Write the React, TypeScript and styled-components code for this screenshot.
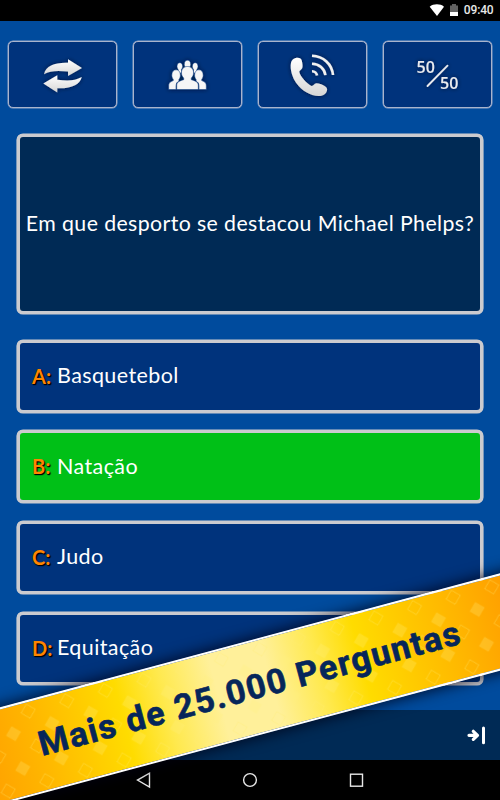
import React from "react";
import styled, { createGlobalStyle } from "styled-components";

const GlobalStyle = createGlobalStyle`
  * { box-sizing: border-box; }
  body { margin: 0; background: #000; }
`;

const Screen = styled.div`
  position: relative;
  display: flex;
  flex-direction: column;
  width: 500px;
  height: 800px;
  overflow: hidden;
  background: #004b9d;
  color: #fff;
  font-family: Lato, sans-serif;
`;

const StatusBar = styled.header`
  display: flex;
  align-items: center;
  justify-content: flex-end;
  height: 21px;
  flex: none;
  padding-right: 6.5px;
  background: #000;
`;

const Clock = styled.span`
  margin-left: 5px;
  font: 500 12px/21px Roboto, sans-serif;
  letter-spacing: -0.15px;
  color: #e8e8e8;
`;

const Lifelines = styled.nav`
  display: grid;
  grid-template-columns: repeat(4, 109px);
  gap: 16px;
  height: 67px;
  margin: 20.4px 8px 0;
  flex: none;
`;

const LifelineButton = styled.button`
  display: block;
  padding: 0;
  border: 1px solid #a9b4cc;
  border-radius: 5px;
  background: #00337c;
  box-shadow: 0 0 0 0.5px #8fa3c8;
  overflow: hidden;

  svg {
    display: block;
    margin: 0 0 -1px -1px;
  }
`;

const Quiz = styled.main`
  display: flex;
  flex-direction: column;
  flex: 1;
  padding: 25.2px 17px 0;
`;

const Question = styled.section`
  display: flex;
  align-items: center;
  justify-content: center;
  height: 180px;
  flex: none;
  border: 3px solid #cbcbcf;
  border-radius: 6px;
  padding-bottom: 2px;
  background: #002a55;
  box-shadow: 0 0 0 0.6px #cbcbcf;
  font-size: 21.3px;
  letter-spacing: 0.4px;
  white-space: nowrap;
`;

const Answers = styled.div`
  display: flex;
  flex-direction: column;
  gap: 17.6px;
  margin-top: 26.2px;
`;

const Answer = styled.button<{ $correct?: boolean }>`
  display: flex;
  align-items: center;
  height: 73px;
  padding: 0 0 2px 12px;
  border: 3px solid #cbcbcf;
  border-radius: 6px;
  background: ${(p) => (p.$correct ? "#00c017" : "#00337c")};
  box-shadow: 0 0 0 0.6px #cbcbcf;
  color: #fff;
  font: 400 21.5px/26px Lato, sans-serif;
  letter-spacing: 0.4px;
  text-align: left;
`;

const Letter = styled.b`
  width: 25px;
  padding-top: 1px;
  font: 700 20px/26px Lato, sans-serif;
  letter-spacing: 0;
  color: #ff8500;
  text-shadow: 1px 1px 1px #000, 1px 1px 1px rgba(0, 0, 0, 0.8);
`;

const Footer = styled.footer`
  display: flex;
  align-items: center;
  justify-content: flex-end;
  height: 50px;
  flex: none;
  padding-right: 13px;
  background: #002a55;
`;

const SystemNav = styled.div`
  display: flex;
  align-items: center;
  justify-content: center;
  gap: 86px;
  height: 40px;
  flex: none;
  background: #000;
`;

const Ribbon = styled.div`
  position: absolute;
  left: -60px;
  top: 641.7px;
  display: flex;
  align-items: center;
  justify-content: center;
  width: 620px;
  height: 94px;
  border: solid #fff;
  border-width: 2px 0;
  background: linear-gradient(
    90deg,
    #ffa000 30px,
    #ffb400 85px,
    #ffdc00 180px,
    #ffe94e 225px,
    #fff09a 278px,
    #fff09a 332px,
    #ffe94e 382px,
    #ffdc00 425px,
    #ffb400 530px,
    #ffa000 580px
  );
  box-shadow: 0 0 14px 2px rgba(0, 0, 20, 0.75);
  transform: rotate(-15deg);
`;

const RibbonPattern = styled.svg`
  position: absolute;
  inset: 0;
`;

const Slogan = styled.strong`
  padding-bottom: 2px;
  z-index: 1;
  font: 700 34px/88px Roboto, sans-serif;
  letter-spacing: 1.45px;
  white-space: nowrap;
  color: #06265a;
  -webkit-text-stroke: 0.6px #06265a;
`;

const answers = [
  { letter: "A", text: "Basquetebol" },
  { letter: "B", text: "Natação", correct: true },
  { letter: "C", text: "Judo" },
  { letter: "D", text: "Equitação" },
];

const IconDefs = () => (
  <defs>
    <linearGradient id="silver" x1="0" y1="0" x2="0" y2="1">
      <stop offset="0" stopColor="#fff" />
      <stop offset="1" stopColor="#d6d6d6" />
    </linearGradient>
    <filter id="soft" x="-30%" y="-30%" width="160%" height="160%">
      <feDropShadow dx="0" dy="0" stdDeviation="2" floodColor="#000820" floodOpacity="0.7" />
    </filter>
  </defs>
);

const SwapIcon = () => (
  <svg width="109" height="67" viewBox="0 0 109 67">
    <IconDefs />
    <g fill="url(#silver)" filter="url(#soft)">
      <path d="M36 32.2C38 23.500 47 20.400 60 20.800V17.200L74 26L60 34V29.500C50 28.500 42 28.500 36 32.200Z" />
      <path d="M73.800 35C72 42.500 64 46.800 49.300 46.300V50.500L35.300 41.500L49.300 33.200V37.700C59 39 67 39 73.800 35Z" />
    </g>
  </svg>
);

const AudienceIcon = () => (
  <svg width="109" height="67" viewBox="0 0 109 67">
    <g fill="#f6f6f6" stroke="#00337c" strokeWidth="0.5" filter="url(#soft)">
      <path d="M44 24.500c0-2.500 1.100-3.800 2.800-3.800s2.800 1.300 2.800 3.800c0 1.200-.5 2.200-1.100 2.800v4.200l-3.400-1.500v-2.700c-.6-.6-1.100-1.600-1.100-2.800Z" />
      <path d="M59.400 24.500c0-2.500 1.100-3.800 2.800-3.800s2.800 1.300 2.800 3.800c0 1.200-.5 2.200-1.100 2.800v2.700l-3.400 1.500v-4.200c-.6-.6-1.100-1.600-1.100-2.800Z" />
      <path d="M51.300 22.400c0-2.700 1.200-4.200 3.200-4.200s3.200 1.500 3.200 4.200c0 1.300-.5 2.400-1.100 3h-4.200c-.6-.6-1.100-1.700-1.100-3Z" />
      <path d="M38.800 33.200c0-3.400 1.700-5.400 4.300-5.400s4.300 2 4.300 5.400c0 1.800-.8 3.400-1.500 4.200v1.800c-2 .9-2.600 1.700-2.900 4.800v3.500h-7.300v-3.300c0-3.200 1-4 4.600-5.600v-1.200c-.7-.8-1.500-2.400-1.500-4.200Z" />
      <path d="M70.200 33.200c0-3.400-1.700-5.400-4.300-5.400s-4.300 2-4.300 5.400c0 1.800.8 3.400 1.500 4.200v1.800c2 .9 2.600 1.700 2.900 4.800v3.500h7.300v-3.300c0-3.200-1-4-4.600-5.600v-1.200c.7-.8 1.500-2.400 1.500-4.200Z" />
      <path d="M48.500 31c0-4.300 2.300-6.500 6-6.500s6 2.200 6 6.500c0 2.200-1 4-2.200 5v1.700c5.400 1.600 7 2.600 7 6.300v3.500H43.700V44c0-3.700 1.600-4.700 7-6.300V36c-1.200-1-2.200-2.800-2.200-5Z" />
    </g>
  </svg>
);

const PhoneIcon = () => (
  <svg width="109" height="67" viewBox="0 0 109 67">
    <g filter="url(#soft)">
      <path
        fill="url(#silver)"
        d="M33 21C34 15.500 42 14.300 43.600 18C44.300 20.500 45 24 44.300 26C43.700 27.800 41.500 28.200 41.300 29.500C41 33 49.500 42.500 53.500 43.900C55.400 44.300 56.100 41.500 58.300 41.300C61 41.300 65.500 43 68 45C71 47.800 67.500 53 63.500 53.700C54 55 44.300 49.500 38.200 41C34.300 35.500 31.800 27 33 21Z"
      />
      <g fill="none" stroke="#f0f0f0" strokeWidth="2.6">
        <path d="M54 29.200A5 5 0 0 1 59 33.500" />
        <path d="M54 21.800C61 21.900 66.600 26.700 67.400 33.200" />
        <path d="M54 13.800C65.400 14.200 74 22 75 33" />
      </g>
    </g>
  </svg>
);

const FiftyIcon = () => (
  <svg width="109" height="67" viewBox="0 0 109 67">
    <g filter="url(#soft)" fill="#e9eaee" fontFamily="'Open Sans', sans-serif" fontSize="16" fontWeight="600">
      <text x="33.500" y="31.400">50</text>
      <text x="57" y="47.200">50</text>
      <path d="M44.500 44L64.500 23.700" stroke="#e9eaee" strokeWidth="1.800" strokeLinecap="round" />
    </g>
  </svg>
);

const lifelines = [
  { label: "Trocar pergunta", Icon: SwapIcon },
  { label: "Ajuda do público", Icon: AudienceIcon },
  { label: "Telefonema", Icon: PhoneIcon },
  { label: "Cinquenta", Icon: FiftyIcon },
];

export default function App() {
  return (
    <>
      <GlobalStyle />
      <Screen>
        <StatusBar>
          <svg width="30" height="21" viewBox="0 0 30 21">
            <path d="M.7 6.700C4.500 3.500 11.300 3.500 15 6.700L8 16Z" fill="#fff" />
            <path d="M21 5.500h2V4h4v1.500h2V12h-8Z" fill="#626262" />
            <path d="M21 12h8v4h-8Z" fill="#fff" />
          </svg>
          <Clock>09:40</Clock>
        </StatusBar>

        <Lifelines>
          {lifelines.map(({ label, Icon }) => (
            <LifelineButton key={label} aria-label={label}>
              <Icon />
            </LifelineButton>
          ))}
        </Lifelines>

        <Quiz>
          <Question>Em que desporto se destacou Michael Phelps?</Question>
          <Answers>
            {answers.map((a) => (
              <Answer key={a.letter} $correct={a.correct}>
                <Letter>{a.letter}:</Letter>
                {a.text}
              </Answer>
            ))}
          </Answers>
        </Quiz>

        <Footer>
          <svg width="22" height="22" viewBox="0 0 22 22" fill="none" stroke="#fff" strokeLinecap="round" strokeLinejoin="round">
            <path d="M4 11.300H12M8.300 7.300L12.500 11.300L8.300 15.300" strokeWidth="3.200" />
            <path d="M18.500 4V18.800" strokeWidth="3" />
          </svg>
        </Footer>

        <SystemNav>
          <svg width="20" height="20" viewBox="0 0 20 20" fill="none" stroke="#e8e8e8" strokeWidth="1.4">
            <path d="M15.500 3.200V17L3.500 10.100Z" />
          </svg>
          <svg width="20" height="20" viewBox="0 0 20 20" fill="none" stroke="#e8e8e8" strokeWidth="1.4">
            <circle cx="10" cy="10" r="6.400" />
          </svg>
          <svg width="20" height="20" viewBox="0 0 20 20" fill="none" stroke="#e8e8e8" strokeWidth="1.4">
            <rect x="4.500" y="4.200" width="12" height="12" />
          </svg>
        </SystemNav>

        <Ribbon>
          <RibbonPattern width="620" height="90" viewBox="-310 -45 620 90">
            <defs>
              <pattern id="diamonds" x="0" y="-9" width="40" height="36" patternUnits="userSpaceOnUse">
                <path d="M20 1.700L27.300 9L20 16.300L12.700 9Z" fill="none" stroke="#ffee70" strokeOpacity="0.38" />
                <path d="M0 19.200L7.800 27L0 34.800ZM40 19.200L32.200 27L40 34.800Z" fill="#fff080" fillOpacity="0.25" />
              </pattern>
            </defs>
            <rect x="-310" y="-45" width="620" height="90" fill="url(#diamonds)" />
          </RibbonPattern>
          <Slogan>Mais de 25.000 Perguntas</Slogan>
        </Ribbon>
      </Screen>
    </>
  );
}
